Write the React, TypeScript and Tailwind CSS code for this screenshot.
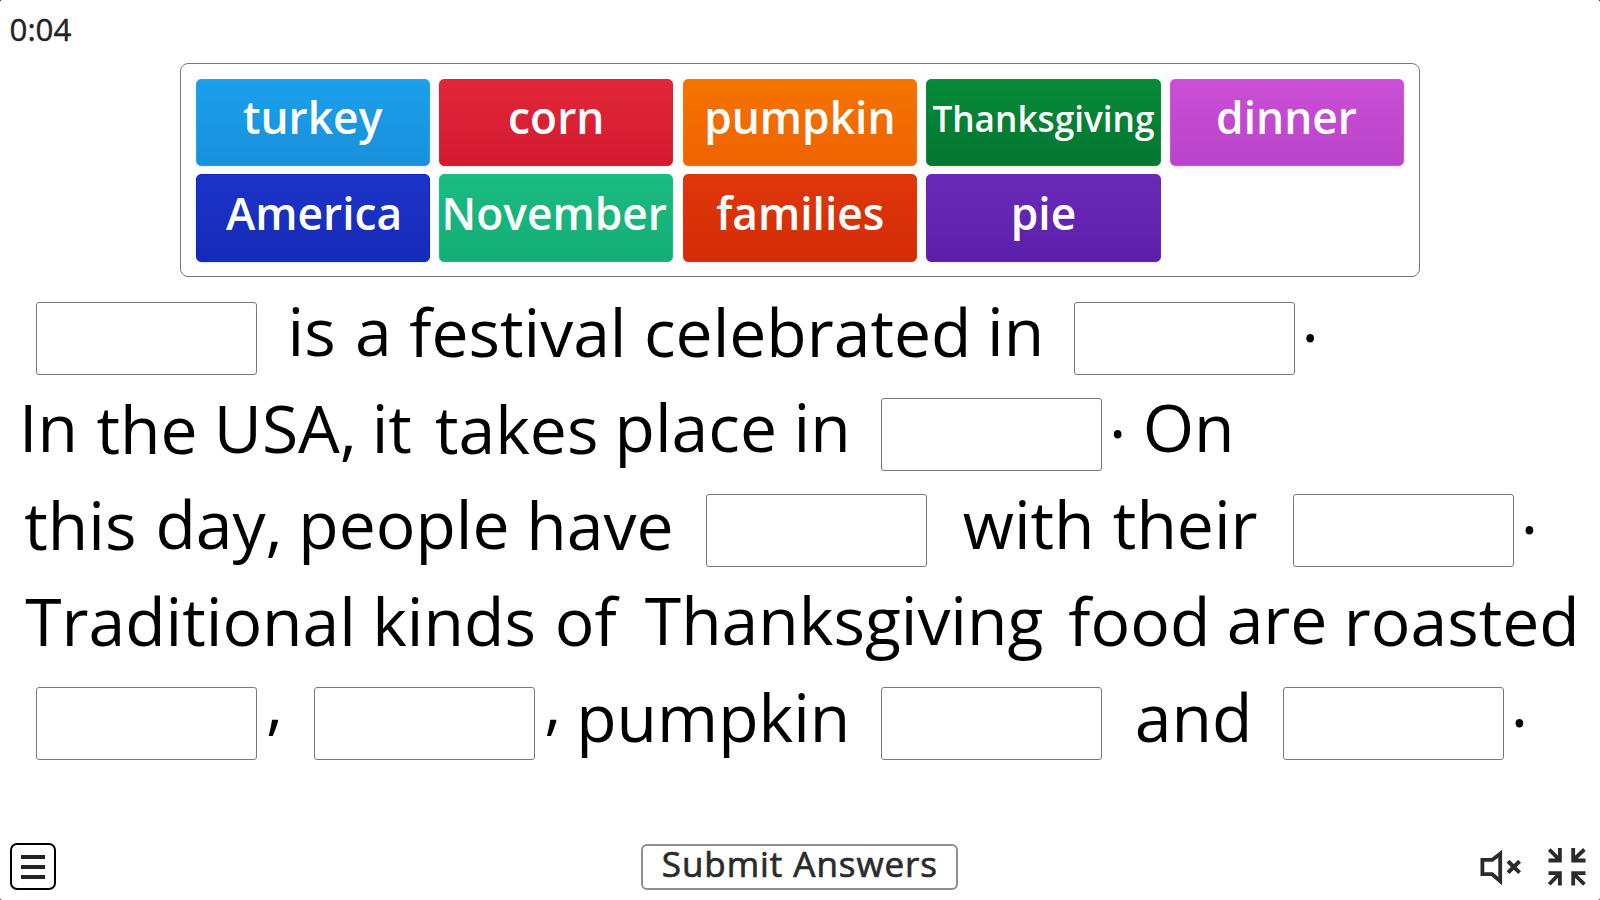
import { clsx } from 'clsx';

const tiles = [
    { word: 'turkey', color: 'from-[#1ca0ea] to-[#1890dc] border-[#1ca9e8]', text: 'text-[44.3px]' },
    { word: 'corn', color: 'from-[#e12739] to-[#d3192f] border-[#df2038]', text: 'text-[44.3px]' },
    { word: 'pumpkin', color: 'from-[#f57400] to-[#ee6300] border-[#f67a00]', text: 'text-[44.3px]' },
    { word: 'Thanksgiving', color: 'from-[#068a38] to-[#047631] border-[#04913d]', text: 'text-[35.2px] pt-[2px]' },
    { word: 'dinner', color: 'from-[#ca4fd6] to-[#b944c9] border-[#cc55da]', text: 'text-[44.3px] mr-px' },
    { word: 'America', color: 'from-[#1c34c8] to-[#152ab8] border-[#0c28c4]', text: 'text-[44.3px] ml-[3px]' },
    { word: 'November', color: 'from-[#1bbb82] to-[#13ae75] border-[#18c08a]', text: 'text-[44.3px] mr-[4px]' },
    { word: 'families', color: 'from-[#df370c] to-[#d32d06] border-[#dc340a]', text: 'text-[44.3px] ml-px' },
    { word: 'pie', color: 'from-[#6a2ab8] to-[#5c1fab] border-[#6b26b8]', text: 'text-[44.3px]' },
]

// an entry without text is an empty answer box
const rows = [
    {
        className: 'pl-[35.7px]',
        items: [
            { className: 'w-[251.8px]' },
            { text: 'is', className: 'w-[67.5px]' },
            { text: 'a', className: 'w-[54.3px]' },
            { text: 'festival', className: 'w-[234.7px] pt-px' },
            { text: 'celebrated', className: 'w-[343px] pt-px' },
            { text: 'in', className: 'w-[86.7px]' },
            { className: 'w-[227.8px]' },
            { text: '.', className: '-mt-[14px]' },
        ],
    },
    {
        className: 'pl-[19px]',
        items: [
            { text: 'In', className: 'w-[77.5px]' },
            { text: 'the', className: 'w-[117.3px] pt-[2px]' },
            { text: 'USA,', className: 'w-[157.9px] pt-px' },
            { text: 'it', className: 'w-[63.3px] pt-px' },
            { text: 'takes', className: 'w-[179.6px] pt-[2px]' },
            { text: 'place', className: 'w-[179px]' },
            { text: 'in', className: 'w-[87px]' },
            { className: 'w-[228.4px]' },
            { text: '.', className: 'w-[33.7px] -mt-[14px]' },
            { text: 'On', className: '' },
        ],
    },
    {
        className: 'pl-[24.3px]',
        items: [
            { text: 'this', className: 'w-[131.2px] pt-[1.5px]' },
            { text: 'day,', className: 'w-[142.8px] pt-px' },
            { text: 'people', className: 'w-[228px] pt-px' },
            { text: 'have', className: 'w-[179.3px] pt-[1.5px]' },
            { className: 'w-[257.2px]' },
            { text: 'with', className: 'w-[150.1px] pt-px' },
            { text: 'their', className: 'w-[179.7px] pt-px' },
            { className: 'w-[228.1px]' },
            { text: '.', className: '-mt-[14px]' },
        ],
    },
    {
        className: 'pl-[25.2px]',
        items: [
            { text: 'Traditional', className: 'w-[347px] pt-px' },
            { text: 'kinds', className: 'w-[182.6px] pt-px' },
            { text: 'of', className: 'w-[90px] pt-px' },
            { text: 'Thanksgiving', className: 'w-[423.5px]' },
            { text: 'food', className: 'w-[158.4px] pt-px' },
            { text: 'are', className: 'w-[117.2px] -mt-px' },
            { text: 'roasted', className: 'pt-px' },
        ],
    },
    {
        className: 'pl-[35.7px]',
        items: [
            { className: 'w-[230.3px]' },
            { text: ',', className: 'w-[48.4px] -mt-[14px]' },
            { className: 'w-[229.8px]' },
            { text: ',', className: 'w-[32px] -mt-[14px]' },
            { text: 'pumpkin', className: 'w-[304.8px] pt-px' },
            { className: 'w-[253.8px]' },
            { text: 'and', className: 'w-[148.5px] pt-px' },
            { className: 'w-[227.6px]' },
            { text: '.', className: '-mt-[14px]' },
        ],
    },
]

function WordBank() {
    return (
        <div className="ml-[179.5px] mt-[62.5px] grid h-[214px] w-[1240.7px] grid-cols-5 grid-rows-2 gap-x-[9.3px] gap-y-[8px] rounded-lg border-[1.5px] border-[#7a7a7a] p-[15px] pb-[14px]">
            {tiles.map((tile) => (
                <div key={tile.word} className={clsx('flex items-center justify-center rounded-[5px] border-[1.5px] bg-linear-to-b shadow-[0_1px_2px_rgba(0,0,0,0.12)]', tile.color)}>
                    <span className={clsx('-mt-[10px] whitespace-nowrap font-semibold leading-none text-white', tile.text)}>{tile.word}</span>
                </div>
            ))}
        </div>
    )
}

function ExitFullscreenIcon() {
    return (
        <svg width="40" height="40" viewBox="0 0 40 40" fill="none" stroke="#2b2b2b" strokeWidth="3.8">
            <path d="M1.5 13.5H12.9V1M2.2 2.5L12 12.3" />
            <path d="M38.5 13.5H26.2V1M37.4 2.5L27 12.3" />
            <path d="M1.5 26.1H12.9V38.6M2.2 37.3L12 27.2" />
            <path d="M38.5 26.1H26.2V38.6M37.4 37.3L27 27.2" />
        </svg>
    )
}

function MutedIcon() {
    return (
        <svg width="42" height="36" viewBox="0 0 42 36" fill="none" stroke="#2b2b2b" strokeWidth="3.8">
            <path d="M2.4 10.9H12.2L20.2 4.7V32.1L12.2 25.2H2.4Z" />
            <path d="M28 12.2L39.6 23.6M39.6 12.2L28 23.6" strokeWidth="4" />
        </svg>
    )
}

export default function App() {
    return (
        <div className="h-[900px] w-[1600px] overflow-hidden bg-black font-['Open_Sans',sans-serif]">
            <div className="flex h-full flex-col rounded-[2px] bg-white">
                <div className="h-0 pl-[9.5px] text-[31.3px] leading-[58px] text-[#222] [-webkit-text-stroke:0.4px_#222]">0:04</div>
                <WordBank />
                <div className="mt-[25.5px] text-[66px] leading-[56px] text-black">
                    {rows.map((row, i) => (
                        <div key={i} className={clsx('flex h-[96.2px] items-start whitespace-nowrap', row.className)}>
                            {row.items.map((item, j) => (
                                <div key={j} className={clsx('shrink-0', item.className)}>
                                    {item.text ?? <div className="h-[73px] w-[221px] rounded-[3px] border-[1.5px] border-[#7a7a7a]" />}
                                </div>
                            ))}
                        </div>
                    ))}
                </div>
                <div className="mt-auto flex items-center pb-[10px] pl-[10px] pr-[13px]">
                    <div className="flex h-[47px] w-[46px] flex-col items-center justify-center gap-[6px] rounded-[7px] border-2 border-black">
                        <span className="h-1 w-[24px] bg-[#222]"></span>
                        <span className="h-1 w-[24px] bg-[#222]"></span>
                        <span className="h-1 w-[24px] bg-[#222]"></span>
                    </div>
                    <div className="ml-[585.4px] flex h-[46px] w-[317px] justify-center rounded-md border-2 border-[#8f8f8f] text-[35px] leading-[36px] tracking-[0.95px] text-[#2b2b2b] [-webkit-text-stroke:0.7px_#2b2b2b]">Submit Answers</div>
                    <div className="ml-auto flex items-center gap-[25px]">
                        <MutedIcon />
                        <ExitFullscreenIcon />
                    </div>
                </div>
            </div>
        </div>
    )
}
